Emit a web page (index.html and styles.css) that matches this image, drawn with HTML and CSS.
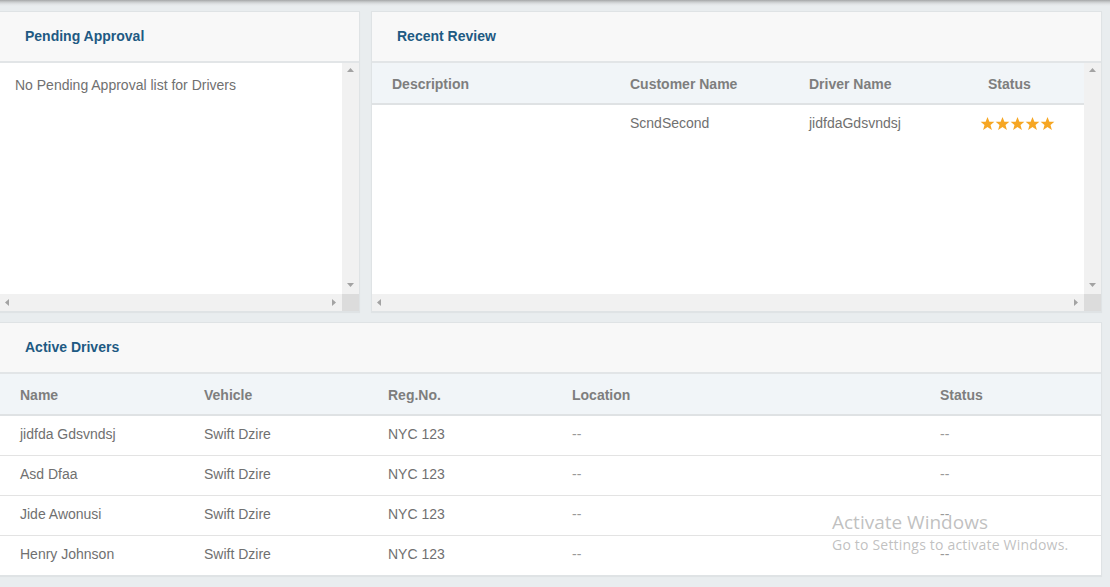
FILE: index.html
```html
<!DOCTYPE html>
<html lang="en">
<head>
<meta charset="utf-8">
<title>Dashboard</title>
<link rel="stylesheet" href="styles.css">
</head>
<body>
<div class="topshade"></div>
<main class="dash">
  <div class="top-row">
    <section class="panel">
      <header class="panel-head"><h2>Pending Approval</h2></header>
      <div class="scrollbox">
        <div class="scroll-main">
          <div class="scroll-content">
            <p class="empty">No Pending Approval list for Drivers</p>
          </div>
          <div class="vbar">
            <svg class="arr" width="7" height="4" viewBox="0 0 7 4"><polygon points="3.5,0 7,4 0,4"/></svg>
            <svg class="arr" width="7" height="4" viewBox="0 0 7 4"><polygon points="0,0 7,0 3.5,4"/></svg>
          </div>
        </div>
        <div class="hbar">
          <div class="htrack">
            <svg class="arr" width="4" height="7" viewBox="0 0 4 7"><polygon points="4,0 4,7 0,3.5"/></svg>
            <svg class="arr" width="4" height="7" viewBox="0 0 4 7"><polygon points="0,0 4,3.5 0,7"/></svg>
          </div>
          <div class="corner"></div>
        </div>
      </div>
    </section>

    <section class="panel">
      <header class="panel-head"><h2>Recent Review</h2></header>
      <div class="scrollbox">
        <div class="scroll-main">
          <div class="scroll-content">
            <table class="grid review">
              <colgroup><col class="c-desc"><col class="c-mid"><col class="c-mid"><col></colgroup>
              <thead>
                <tr><th>Description</th><th>Customer Name</th><th>Driver Name</th><th>Status</th></tr>
              </thead>
              <tbody>
                <tr>
                  <td></td><td>ScndSecond</td><td>jidfdaGdsvndsj</td>
                  <td class="stars-cell">
                    <span class="stars">
                      <svg width="15" height="15" viewBox="0 0 24 24"><polygon points="12,1.5 15,9 23,9.3 16.8,14.3 19,22.3 12,17.7 5,22.3 7.2,14.3 1,9.3 9,9"/></svg><svg width="15" height="15" viewBox="0 0 24 24"><polygon points="12,1.5 15,9 23,9.3 16.8,14.3 19,22.3 12,17.7 5,22.3 7.2,14.3 1,9.3 9,9"/></svg><svg width="15" height="15" viewBox="0 0 24 24"><polygon points="12,1.5 15,9 23,9.3 16.8,14.3 19,22.3 12,17.7 5,22.3 7.2,14.3 1,9.3 9,9"/></svg><svg width="15" height="15" viewBox="0 0 24 24"><polygon points="12,1.5 15,9 23,9.3 16.8,14.3 19,22.3 12,17.7 5,22.3 7.2,14.3 1,9.3 9,9"/></svg><svg width="15" height="15" viewBox="0 0 24 24"><polygon points="12,1.5 15,9 23,9.3 16.8,14.3 19,22.3 12,17.7 5,22.3 7.2,14.3 1,9.3 9,9"/></svg>
                    </span>
                  </td>
                </tr>
              </tbody>
            </table>
          </div>
          <div class="vbar">
            <svg class="arr" width="7" height="4" viewBox="0 0 7 4"><polygon points="3.5,0 7,4 0,4"/></svg>
            <svg class="arr" width="7" height="4" viewBox="0 0 7 4"><polygon points="0,0 7,0 3.5,4"/></svg>
          </div>
        </div>
        <div class="hbar">
          <div class="htrack">
            <svg class="arr" width="4" height="7" viewBox="0 0 4 7"><polygon points="4,0 4,7 0,3.5"/></svg>
            <svg class="arr" width="4" height="7" viewBox="0 0 4 7"><polygon points="0,0 4,3.5 0,7"/></svg>
          </div>
          <div class="corner"></div>
        </div>
      </div>
    </section>
  </div>

  <section class="panel drivers">
    <header class="panel-head"><h2>Active Drivers</h2></header>
    <table class="grid active">
      <colgroup><col class="c-184"><col class="c-184"><col class="c-184"><col class="c-368"><col></colgroup>
      <thead>
        <tr><th>Name</th><th>Vehicle</th><th>Reg.No.</th><th>Location</th><th>Status</th></tr>
      </thead>
      <tbody>
        <tr><td>jidfda Gdsvndsj</td><td>Swift Dzire</td><td>NYC 123</td><td class="dash-val">--</td><td class="dash-val">--</td></tr>
        <tr><td>Asd Dfaa</td><td>Swift Dzire</td><td>NYC 123</td><td class="dash-val">--</td><td class="dash-val">--</td></tr>
        <tr><td>Jide Awonusi</td><td>Swift Dzire</td><td>NYC 123</td><td class="dash-val">--</td><td class="dash-val">--</td></tr>
        <tr><td>Henry Johnson</td><td>Swift Dzire</td><td>NYC 123</td><td class="dash-val">--</td><td class="dash-val">--</td></tr>
      </tbody>
    </table>
  </section>
</main>

<div class="watermark">
  <div class="wm-title">Activate Windows</div>
  <div class="wm-sub">Go to Settings to activate Windows.</div>
</div>
</body>
</html>
```

FILE: styles.css
```css
* { box-sizing: border-box; }

html, body {
  margin: 0;
  padding: 0;
}

body {
  background: #e9edef;
  font-family: "Liberation Sans", Arial, sans-serif;
  font-size: 14px;
  color: #707070;
  width: 1110px;
  height: 587px;
  overflow: hidden;
  position: relative;
}

.topshade {
  height: 6px;
  background: linear-gradient(#a4a6a7 0px, #c9cccd 2px, #e0e3e5 4px, #e9edef 6px);
}

.dash {
  padding: 5px 8px 0 0;
  display: flex;
  flex-direction: column;
  gap: 10px;
}

.top-row {
  display: grid;
  grid-template-columns: 360px 1fr;
  gap: 11px;
}

.panel {
  background: #fff;
  border: 1px solid #dfe3e5;
  border-left: none;
  box-shadow: 0 1px 1px rgba(0,0,0,0.04);
}

.top-row .panel + .panel {
  border-left: 1px solid #dfe3e5;
}

.panel-head {
  height: 51px;
  background: #f8f8f8;
  border-bottom: 2px solid #e2e5e7;
  display: flex;
  align-items: center;
  padding-left: 25px;
  padding-bottom: 1px;
}

.panel-head h2 {
  margin: 0;
  font-size: 14px;
  font-weight: bold;
  color: #1e5a83;
  line-height: 16px;
}

.scrollbox {
  display: flex;
  flex-direction: column;
}

.scroll-main {
  display: flex;
  height: 231px;
}

.scroll-content {
  flex: 1;
  min-width: 0;
  overflow: hidden;
}

.vbar {
  width: 17px;
  background: #f1f1f1;
  display: flex;
  flex-direction: column;
  justify-content: space-between;
  align-items: center;
  padding: 5px 0 7px;
}

.hbar {
  display: flex;
  height: 17px;
}

.htrack {
  flex: 1;
  background: #f1f1f1;
  display: flex;
  justify-content: space-between;
  align-items: center;
  padding: 0 6px 0 5px;
}

.corner {
  width: 17px;
  background: #dcdcdc;
}

.arr {
  display: block;
  fill: #a3a3a3;
}

.empty {
  margin: 0;
  padding: 13px 15px;
  line-height: 18px;
  color: #707070;
}

.grid {
  width: 100%;
  border-collapse: collapse;
  table-layout: fixed;
}

.grid th {
  background: #f1f5f8;
  color: #7e7e7e;
  font-weight: bold;
  text-align: left;
  height: 41px;
  padding: 2px 0 0 20px;
  border-bottom: 2px solid #dfe2e4;
  line-height: 16px;
}

.grid td {
  height: 40px;
  padding: 0 0 2px 20px;
  color: #707070;
  line-height: 16px;
  border-bottom: 1px solid #e3e3e3;
}

.review td {
  border-bottom: none;
  height: 38px;
  padding-bottom: 1px;
}

.c-desc { width: 238px; }
.c-mid { width: 179px; }
.c-184 { width: 184px; }
.c-368 { width: 368px; }

.review .stars-cell {
  padding-left: 12px;
}

.stars {
  display: inline-flex;
  vertical-align: middle;
}

.stars svg {
  display: block;
  fill: #f6a623;
}

.grid .dash-val {
  color: #9a9a9a;
}

.active tbody tr:last-child td {
  border-bottom: none;
}

.watermark {
  position: absolute;
  left: 832px;
  top: 509px;
  font-family: "Open Sans", "Noto Sans", sans-serif;
  color: rgba(165, 165, 165, 0.7);
  pointer-events: none;
}

.wm-title {
  font-size: 19px;
  line-height: 26px;
  letter-spacing: 0;
}

.wm-sub {
  font-size: 14px;
  line-height: 20px;
  margin-top: 0;
  letter-spacing: 0.2px;
}
```
